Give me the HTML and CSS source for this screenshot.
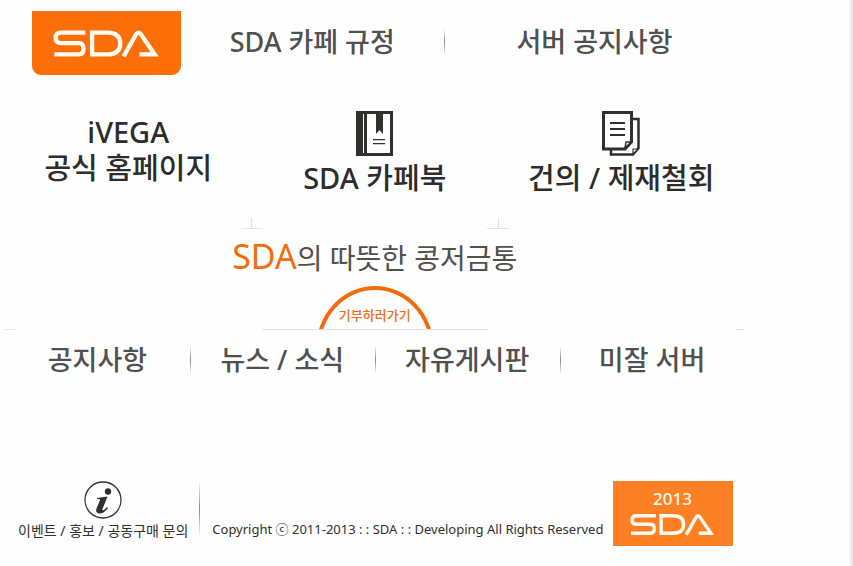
FILE: index.html
```html
<!DOCTYPE html>
<html lang="ko">
<head>
<meta charset="utf-8">
<meta name="viewport" content="width=device-width, initial-scale=1">
<title>SDA 카페</title>
<link rel="stylesheet" href="styles.css">
</head>
<body>
<svg class="defs" aria-hidden="true">
  <symbol id="sda-mark" viewBox="0 0 326 86">
    <g fill="none" stroke="currentColor" stroke-width="13">
      <path d="M98 10H24Q8 10 8 26T24 42H78Q92 42 92 59T78 76H4"/>
      <path d="M118 10H164Q203 10 203 43T164 76H118Z"/>
      <path d="M213 82 249 18Q258 2 267 18L307 76H261"/>
    </g>
  </symbol>
</svg>
<div class="page">
  <header class="top">
    <a class="brand" href="#" aria-label="SDA"><svg class="brand-mark" aria-hidden="true"><use href="#sda-mark"/></svg></a>
    <nav class="top-nav">
      <a href="#">SDA 카페 규정</a>
      <span class="divider"></span>
      <a href="#">서버 공지사항</a>
    </nav>
  </header>

  <main>
    <div class="features">
      <a class="feature feature-text" href="#"><span>iVEGA</span><span>공식 홈페이지</span></a>
      <a class="feature" href="#">
        <svg class="feature-icon" viewBox="0 0 38 45" aria-hidden="true">
          <path fill="#30302c" d="M0 0H37V45H0Z"/>
          <path fill="#fff" d="M7 3H8V42H7ZM11 3H34V42H11Z"/>
          <path fill="#30302c" d="M20 2H27V23L23.500 19 20 23ZM17 28H29V29.300H17ZM17 32H29V33.300H17Z"/>
        </svg>
        <span>SDA 카페북</span>
      </a>
      <a class="feature" href="#">
        <svg class="feature-icon" viewBox="0 0 38 45" aria-hidden="true">
          <g fill="#fff" stroke="#30302c" stroke-width="2.500">
            <path d="M9 8H36.500V37L31 43.500H9Z"/>
            <path stroke-width="1.200" d="M31 43V38H36Z"/>
            <path stroke-width="3" d="M1.500 1.500H29.500V31L23 38H1.500Z"/>
            <path stroke-width="1.500" d="M23 37 24 31H29Z"/>
            <path stroke-width="2" d="M8 12H23M8 18H23M8 24H23"/>
          </g>
        </svg>
        <span>건의 / 제재철회</span>
      </a>
    </div>
    <div class="ticks"><span class="tick"></span><span class="tick"></span></div>

    <section class="bank">
      <h1><strong>SDA</strong>의 따뜻한 콩저금통</h1>
      <a class="donate" href="#">기부하러가기</a>
      <div class="rule"><span></span><span class="rule-mid"></span><span></span></div>
    </section>

    <nav class="boards">
      <a href="#">공지사항</a>
      <a href="#">뉴스 / 소식</a>
      <a href="#">자유게시판</a>
      <a href="#">미잘 서버</a>
    </nav>
  </main>

  <footer class="bottom">
    <a class="contact" href="#">
      <svg class="info-icon" viewBox="0 0 38 38" aria-hidden="true">
        <circle cx="19" cy="19" r="18" fill="#fff" stroke="#30302c" stroke-width="1.300"/>
        <circle cx="24" cy="10.500" r="3.200" fill="#30302c"/>
        <path fill="#30302c" d="M13 17 23.500 15.500 18.500 28Q18 30 20 29L23 26 24 27Q20 32.500 15.500 32.500 11 32 12.500 27.500L16 19Q16 17.500 13 18Z"/>
      </svg>
      <span>이벤트 / 홍보 / 공동구매 문의</span>
    </a>
    <span class="divider divider-tall"></span>
    <p class="copyright">Copyright ⓒ 2011-2013 : : SDA : : Developing All Rights Reserved</p>
    <div class="stamp"><span>2013</span><svg class="stamp-mark" role="img" aria-label="SDA"><use href="#sda-mark"/></svg></div>
  </footer>
</div>
</body>
</html>
```
FILE: styles.css
```css
* { box-sizing: border-box; }

body {
  margin: 0;
  min-height: 100vh;
  border-right: 3px solid #ebebeb;
  background: #fefefe;
  color: #50504f;
  font-family: "Noto Sans", "Noto Sans CJK KR", sans-serif;
  font-size: 27px;
  font-weight: 500;
  line-height: 36px;
}

a { color: inherit; text-decoration: none; white-space: nowrap; }

.defs { position: absolute; width: 0; height: 0; }

.page { width: 87%; margin-left: 5px; padding-top: 11px; }

.divider,
.boards a + a::before {
  width: 1px;
  height: 28px;
  background: linear-gradient(transparent, #888, transparent);
}

.top { display: flex; padding-left: 27px; }

.brand {
  display: flex;
  align-items: center;
  justify-content: center;
  width: 149px;
  height: 64px;
  border-radius: 0 0 9px 9px;
  background: #fb6e08;
  color: #fffaf0;
}

.brand-mark { width: 108px; height: 29px; }

.top-nav {
  flex: 1;
  display: grid;
  grid-template-columns: 7fr 1px 8fr;
  align-items: center;
  padding-bottom: 2px;
  text-align: center;
}

.features {
  display: grid;
  grid-template-columns: repeat(3, 1fr);
  margin-top: 36px;
  color: #2c2c2a;
  font-size: 29px;
}

.feature {
  display: flex;
  flex-direction: column;
  align-items: center;
  gap: 4px;
}

.feature-text { gap: 0; padding-top: 3px; }
.feature-icon { width: 38px; height: 45px; }

.ticks {
  display: grid;
  grid-template-columns: repeat(3, 1fr);
  margin-top: 22px;
}

.tick {
  grid-column: 2;
  width: 22px;
  height: 11px;
  margin-left: -11px;
  border-bottom: 1px solid #e2e2e2;
  background: linear-gradient(#e2e2e2, #e2e2e2) center / 1px 100% no-repeat;
}

.tick + .tick { grid-column: 3; }

.bank {
  display: flex;
  flex-direction: column;
  align-items: center;
}

.bank h1 {
  margin: 5px 0 0;
  font-size: 28px;
  font-weight: 400;
  line-height: 44px;
}

.bank strong {
  color: #f26c0d;
  font-size: 34px;
  font-weight: 400;
}

.donate {
  position: relative;
  width: 118px;
  height: 43px;
  margin-top: 6px;
  padding-top: 19px;
  overflow: hidden;
  color: #ee6c12;
  font-size: 13px;
  line-height: 20px;
  text-align: center;
}

.donate::before {
  content: "";
  position: absolute;
  inset: 0 0 auto;
  height: 118px;
  border: 4px solid #f26c0d;
  border-radius: 50%;
}

.rule {
  align-self: stretch;
  display: flex;
  justify-content: space-between;
}

.rule span { width: 10px; height: 1px; background: #e2e2e2; }
.rule .rule-mid { width: 226px; }

.boards {
  display: grid;
  grid-template-columns: repeat(4, 1fr);
  margin-top: 12px;
}

.boards a {
  position: relative;
  text-align: center;
}

.boards a + a::before {
  content: "";
  position: absolute;
  left: 0;
  top: 4px;
}

.bottom {
  display: flex;
  align-items: flex-start;
  margin-top: 103px;
  padding-left: 13px;
  color: #30302e;
  font-size: 14px;
  font-weight: 400;
  line-height: 20px;
}

.contact {
  display: flex;
  flex-direction: column;
  align-items: center;
  gap: 2px;
}

.info-icon { width: 38px; height: 38px; }

.divider-tall { height: 56px; margin-left: 11px; }

.copyright {
  margin: 38px 0 0 12px;
  font-size: 13px;
  white-space: nowrap;
}

.stamp {
  flex: none;
  display: flex;
  flex-direction: column;
  align-items: center;
  gap: 4px;
  width: 120px;
  height: 65px;
  margin: 0 12px 0 auto;
  padding-top: 8px;
  background: #fd8024;
  color: #fffaf0;
  font-size: 17px;
  font-weight: 500;
}

.stamp-mark { width: 86px; height: 23px; }
```
